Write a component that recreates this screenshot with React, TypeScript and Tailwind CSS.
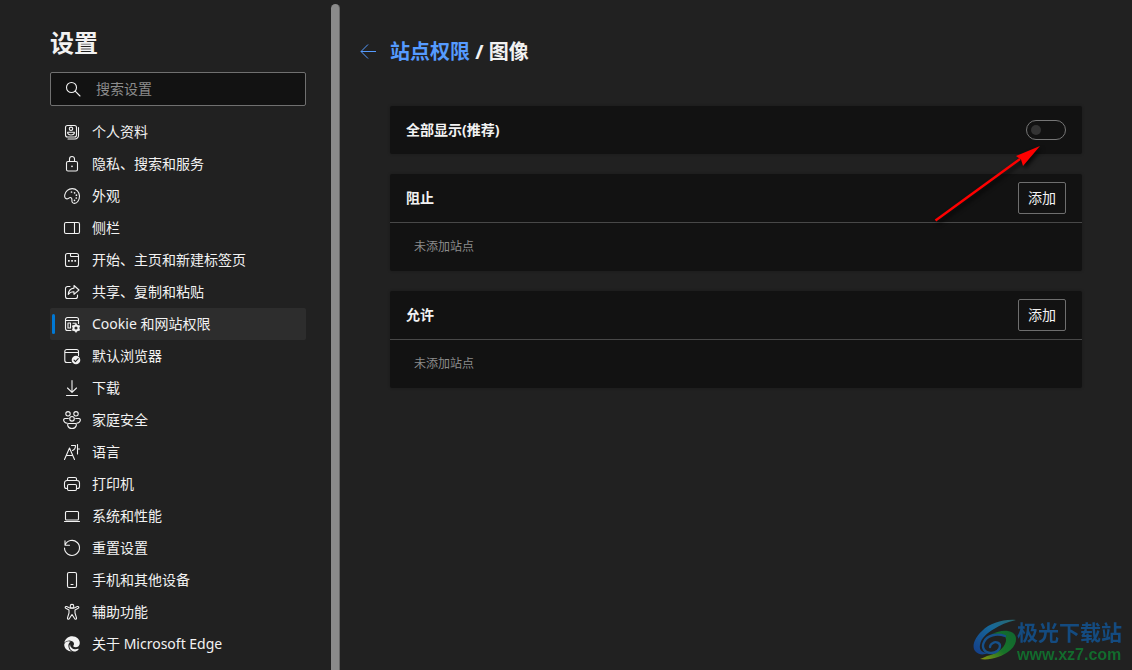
import { useState } from "react";
import type { ReactNode } from "react";

type NavItem = { label: string; icon: ReactNode; active?: boolean };

function Icon({ children }: { children: ReactNode }) {
  return (
    <svg
      viewBox="0 0 16 16"
      className="size-4 shrink-0 overflow-visible"
      fill="none"
      stroke="currentColor"
      strokeWidth="1.1"
      strokeLinecap="round"
      strokeLinejoin="round"
      aria-hidden="true"
    >
      {children}
    </svg>
  );
}

const NAV_ITEMS: NavItem[] = [
  {
    label: "个人资料",
    icon: (
      <Icon>
        <rect x="1.5" y="1.5" width="11" height="11.5" rx="2" />
        <path d="M14.5 3.5v8a3.5 3.5 0 0 1-3.5 3.5H4" />
        <circle cx="7" cy="4.8" r="1.7" />
        <path d="M3.6 8.3h6.8c0 1.8-1.4 2.7-3.4 2.7s-3.4-.9-3.4-2.7z" />
      </Icon>
    ),
  },
  {
    label: "隐私、搜索和服务",
    icon: (
      <Icon>
        <rect x="2.5" y="5.5" width="11" height="9.5" rx="1.5" />
        <path d="M5.5 5.5V3a2.5 2.5 0 0 1 5 0v2.5" />
        <circle cx="8" cy="10.3" r=".9" fill="currentColor" stroke="none" />
      </Icon>
    ),
  },
  {
    label: "外观",
    icon: (
      <Icon>
        <path d="M.7 7.2C1.3 3.2 4.6.6 8.2.6c4.2 0 7.3 3.3 7.3 7.5 0 4.1-2.3 7.3-5.1 7.3-1.8 0-2.6-1.3-2.5-3 .1-1.6-.3-2.9-1.7-2.9-1.2 0-1.7 1.4-3.3 1.4C1.2 10.9.4 9.2.7 7.2z" />
        <g fill="currentColor" stroke="none">
          <circle cx="7.5" cy="4" r=".85" />
          <circle cx="10.6" cy="4.8" r=".85" />
          <circle cx="12.4" cy="7.2" r=".85" />
          <circle cx="12.3" cy="10" r=".85" />
          <circle cx="10.5" cy="12.3" r=".85" />
        </g>
      </Icon>
    ),
  },
  {
    label: "侧栏",
    icon: (
      <Icon>
        <rect x=".5" y="2.5" width="15" height="11" rx="1.5" />
        <path d="M10.5 2.5v11" />
      </Icon>
    ),
  },
  {
    label: "开始、主页和新建标签页",
    icon: (
      <Icon>
        <rect x="1.5" y="1.5" width="13" height="13" rx="2" />
        <path d="M6.5 1.5v2.3c0 .5.2.7.7.7h7.3" />
        <g fill="currentColor" stroke="none">
          <rect x="4" y="8" width="1.7" height="1.7" />
          <rect x="7.2" y="8" width="1.7" height="1.7" />
          <rect x="10.4" y="8" width="1.7" height="1.7" />
        </g>
      </Icon>
    ),
  },
  {
    label: "共享、复制和粘贴",
    icon: (
      <Icon>
        <path d="M6 2.5H3.5a2 2 0 0 0-2 2v8a2 2 0 0 0 2 2h8a2 2 0 0 0 2-2V11" />
        <path d="M10 1.5 15 6l-5 4.3V7.8C7.5 7.7 5.7 8.5 4.3 10.5c.2-3.5 2.3-6.1 5.7-6.4z" />
      </Icon>
    ),
  },
  {
    label: "Cookie 和网站权限",
    active: true,
    icon: (
      <Icon>
        <path d="M7 14.5H3.500a2 2 0 0 1-2-2v-9a2 2 0 0 1 2-2h9a2 2 0 0 1 2 2v4M1.500 4.500h13" />
        <path d="M4 7h2.500v5H4zM9 7.200h3" />
        <circle cx="12" cy="12" r="2.6" strokeWidth="2" />
        <path
          d="M12 8.300v1M12 14.700v1M8.800 10.100l.9.500M14.300 13.400l.9.500M8.800 13.900l.9-.5M14.300 10.600l.9-.5"
          strokeWidth="1.7"
        />
      </Icon>
    ),
  },
  {
    label: "默认浏览器",
    icon: (
      <Icon>
        <path d="M7 14.500H2.800a2 2 0 0 1-2-2v-9a2 2 0 0 1 2-2h9.700a2 2 0 0 1 2 2v4M.8 4.500h13.700" />
        <circle cx="12" cy="12" r="4.3" fill="currentColor" stroke="none" />
        <path d="m10 12.200 1.400 1.400 2.800-3" stroke="#212121" />
      </Icon>
    ),
  },
  {
    label: "下载",
    icon: (
      <Icon>
        <path d="M8 .5v11.500M3.500 8 8 12.300 12.500 8M2.500 15.500h11" />
      </Icon>
    ),
  },
  {
    label: "家庭安全",
    icon: (
      <Icon>
        <circle cx="4" cy="1.8" r="2.2" />
        <circle cx="12" cy="1.8" r="2.2" />
        <circle cx="8" cy="6.8" r="2.3" />
        <path d="M4.300 6.500H1C-1 6.500-1.200 10.500 3.300 11.200M11.700 6.500H15c2 0 2.200 4-2.300 4.700" />
        <path d="M4.500 11.500h7c1.500 0 1.300 5-3.500 5s-5-5-3.500-5z" />
      </Icon>
    ),
  },
  {
    label: "语言",
    icon: (
      <Icon>
        <path d="M.5 15.500 5.500 4l5 11.500M2.500 11.500h6" />
        <path d="M7.500 1.500h4c0 2.700-1 4.300-3 5M13.500.5v9.500M13.500 5h2" />
      </Icon>
    ),
  },
  {
    label: "打印机",
    icon: (
      <Icon>
        <path d="M3.500 12.500h-1a2 2 0 0 1-2-2V7a2.500 2.500 0 0 1 2.500-2.500h10A2.500 2.500 0 0 1 15.500 7v3.500a2 2 0 0 1-2 2h-1" />
        <path d="M3.500 4.500V3A1.500 1.500 0 0 1 5 1.500h6A1.500 1.500 0 0 1 12.500 3v1.500" />
        <rect x="3.5" y="8.5" width="9" height="6" rx="1.2" />
      </Icon>
    ),
  },
  {
    label: "系统和性能",
    icon: (
      <Icon>
        <rect x="1.5" y="3.5" width="13" height="8.5" rx="1" />
        <path d="M.5 13.500h15" />
      </Icon>
    ),
  },
  {
    label: "重置设置",
    icon: (
      <Icon>
        <path d="M1 5.200A7.500 7.500 0 1 1 .5 8M1 .8v4.400h4.500" />
      </Icon>
    ),
  },
  {
    label: "手机和其他设备",
    icon: (
      <Icon>
        <rect x="3.5" y=".5" width="9" height="15" rx="1.5" />
        <path d="M7 12.500h2" />
      </Icon>
    ),
  },
  {
    label: "辅助功能",
    icon: (
      <Icon>
        <circle cx="8" cy="2.2" r="1.8" />
        <path d="M6.300 4.200 2.700 2.600C1.300 2 .6 3.600 1.800 4.300L5 6v3L3.500 13.800c-.4 1.500 1.300 2.100 1.900.7L8 10.500l2.600 4c.6 1.400 2.300.8 1.900-.7L11 9V6l3.200-1.700c1.200-.7.5-2.300-.9-1.700L9.700 4.200z" />
      </Icon>
    ),
  },
  {
    label: "关于 Microsoft Edge",
    icon: (
      <Icon>
        <g fill="currentColor" stroke="none">
          <path d="M.3 6.700C1.200 2.900 4.300.3 8.200.3c4.500 0 7.600 3.300 7.600 6.600 0 2.600-1.900 4.300-4.200 4.300-1.700 0-2.600-.7-2.300-1.400.8-1 .9-2.100.4-3.100C8.600 4.300 3.500 3.200.3 6.700z" />
          <path d="M.2 8.600C.7 5.700 4.200 4.500 6.600 5.800 4.400 7 3.900 9.500 4.800 11.900c.6 1.600 1.700 2.900 3.300 3.700C3.800 15.700.2 12.500.2 8.600z" />
          <path d="M6.200 8.200c-.5 3.600 3.800 6 7.900 4.600.6-.2.8.2.400.7-1.200 1.400-2.900 2.200-4.200 2.100-3.900-.7-6.100-4.900-4.100-7.400z" />
        </g>
      </Icon>
    ),
  },
];

function Sidebar() {
  return (
    <aside className="w-[331px] shrink-0 pt-[25px] pr-[25px] pl-[50px]">
      <h1 className="text-2xl leading-9 font-bold">设置</h1>
      <label className="mt-[11px] flex h-[34px] items-center gap-[15px] rounded-xs border border-[#707070] bg-[#121212] px-[14px]">
        <svg
          viewBox="0 0 16 16"
          className="size-4 shrink-0"
          fill="none"
          stroke="currentColor"
          strokeWidth="1.1"
          strokeLinecap="round"
          aria-hidden="true"
        >
          <circle cx="6.5" cy="6.5" r="5" />
          <path d="m10.200 10.200 4.800 4.800" />
        </svg>
        <input
          type="search"
          aria-label="搜索设置"
          placeholder="搜索设置"
          className="min-w-0 flex-1 bg-transparent text-sm outline-none placeholder:text-[#8c8c8c]"
        />
      </label>
      <nav className="mt-[10px]">
        {NAV_ITEMS.map((item) => (
          <a
            key={item.label}
            href="#"
            aria-current={item.active ? "page" : undefined}
            className={
              item.active
                ? "flex h-8 items-center rounded-xs bg-[#2d2d2d] pl-[2px] text-sm"
                : "flex h-8 items-center pl-[2px] text-sm"
            }
          >
            <span
              className={
                item.active
                  ? "mr-[9px] h-5 w-[3px] rounded-full bg-[#0078d4]"
                  : "mr-[9px] h-5 w-[3px]"
              }
            />
            {item.icon}
            <span className="ml-3 whitespace-nowrap">{item.label}</span>
          </a>
        ))}
      </nav>
    </aside>
  );
}

function SiteList({ title }: { title: string }) {
  return (
    <section className="rounded-xs bg-[#121212] shadow-[0_0_3px_rgba(0,0,0,0.25)]">
      <header className="flex h-12 items-center justify-between px-4">
        <h3 className="text-sm font-bold">{title}</h3>
        <button
          type="button"
          className="h-8 w-12 rounded-xs border border-[#6e6e6e] text-sm"
        >
          添加
        </button>
      </header>
      <p className="flex h-[49px] items-center border-t border-[#484848] px-6 text-xs text-[#8c8c8c]">
        未添加站点
      </p>
    </section>
  );
}

function Pointer() {
  return (
    <svg
      viewBox="0 0 116 86"
      className="pointer-events-none absolute -top-9 right-[34px] h-[86px] w-[116px] drop-shadow-[2px_3px_2px_rgba(0,0,0,0.8)]"
      aria-hidden="true"
    >
      <path d="M3.5 82.5 88 21" stroke="#ff0000" strokeWidth="2.4" />
      <path d="M108 8 84 18l5 3.5 2 6.5z" fill="#ff0000" />
    </svg>
  );
}

function Watermark() {
  return (
    <div
      className="pointer-events-none fixed right-[10px] bottom-[5px] flex items-center"
      aria-hidden="true"
    >
      <svg viewBox="0 0 44 46" className="h-[46px] w-11">
        <defs>
          <linearGradient id="swoosh-blue" x1="1" y1="0" x2="0" y2="1">
            <stop offset="0" stopColor="#2a6a6e" />
            <stop offset=".4" stopColor="#176899" />
            <stop offset="1" stopColor="#143c88" />
          </linearGradient>
          <linearGradient id="swoosh-green" x1="1" y1="0" x2="0" y2="1">
            <stop offset="0" stopColor="#116631" />
            <stop offset=".55" stopColor="#177329" />
            <stop offset="1" stopColor="#8b930d" />
          </linearGradient>
        </defs>
        <path
          d="M43 1C30 0 17 4 9 12 1 19-2 29 3 33c3 3 8 3 12 1-6 0-9-3-8-8 1-7 7-12 14-16 6-4 13-7 22-9z"
          fill="url(#swoosh-blue)"
        />
        <path
          d="M19 15c9-5 23-5 24 4 1 9-9 16-18 19-6 2-12 3-18 2 3-1 5-2 7-3 8-2 15-6 18-12 4-8-3-11-13-10z"
          fill="url(#swoosh-green)"
        />
        <path
          d="M32 17c-8-3-18-1-21 6-3 6 1 11 7 11 5 0 9-3 9-7 0-3-4-5-7-3-2 1-3 2-3 4"
          fill="none"
          stroke="#165089"
          strokeWidth="2.4"
          strokeLinecap="round"
        />
      </svg>
      <div className="flex flex-col">
        <span className="font-['Noto_Sans_CJK_SC',sans-serif] text-[21px] leading-[27px] font-bold text-[#144b80]">
          极光下载站
        </span>
        <span className="font-['Liberation_Sans',sans-serif] text-base leading-5 font-bold text-[#136b2d]">
          www.xz7.com
        </span>
      </div>
    </div>
  );
}

export default function App() {
  const [showAll, setShowAll] = useState(false);

  return (
    <div className="flex min-h-screen bg-[#212121] font-['Noto_Sans','Noto_Sans_CJK_SC',sans-serif] text-[#f2f2f2]">
      <Sidebar />
      <div className="mt-1 w-[9px] shrink-0 rounded-t-full border-r border-[#666666] bg-[#8b8b8b]" />
      <main className="min-w-0 flex-1 pt-8 pr-[50px] pl-5">
        <div className="flex h-10 items-center">
          <button type="button" aria-label="返回" className="text-[#559bff]">
            <svg
              viewBox="0 0 16 16"
              className="size-4"
              fill="none"
              stroke="currentColor"
              strokeWidth="1"
              aria-hidden="true"
            >
              <path d="M16 7.500H1M8 .5 1 7.500l7 7" />
            </svg>
          </button>
          <h2 className="ml-[14px] text-xl leading-8 font-bold">
            <a href="#" className="text-[#559bff]">
              站点权限
            </a>
            {" / 图像"}
          </h2>
        </div>

        <div className="mt-[34px] ml-[30px] flex flex-col gap-5">
          <section className="flex h-12 items-center justify-between rounded-xs bg-[#121212] px-4 shadow-[0_0_3px_rgba(0,0,0,0.25)]">
            <label htmlFor="show-all" className="text-sm font-bold">
              全部显示(推荐)
            </label>
            <input
              id="show-all"
              type="checkbox"
              role="switch"
              checked={showAll}
              onChange={(e) => setShowAll(e.target.checked)}
              className="flex h-5 w-10 appearance-none items-center rounded-full border border-[#767676] px-1 before:size-[10px] before:rounded-full before:bg-[#333333] checked:justify-end checked:bg-[#0078d4] checked:before:bg-white"
            />
          </section>
          <div className="relative">
            <SiteList title="阻止" />
            <Pointer />
          </div>
          <SiteList title="允许" />
        </div>
      </main>
      <Watermark />
    </div>
  );
}
